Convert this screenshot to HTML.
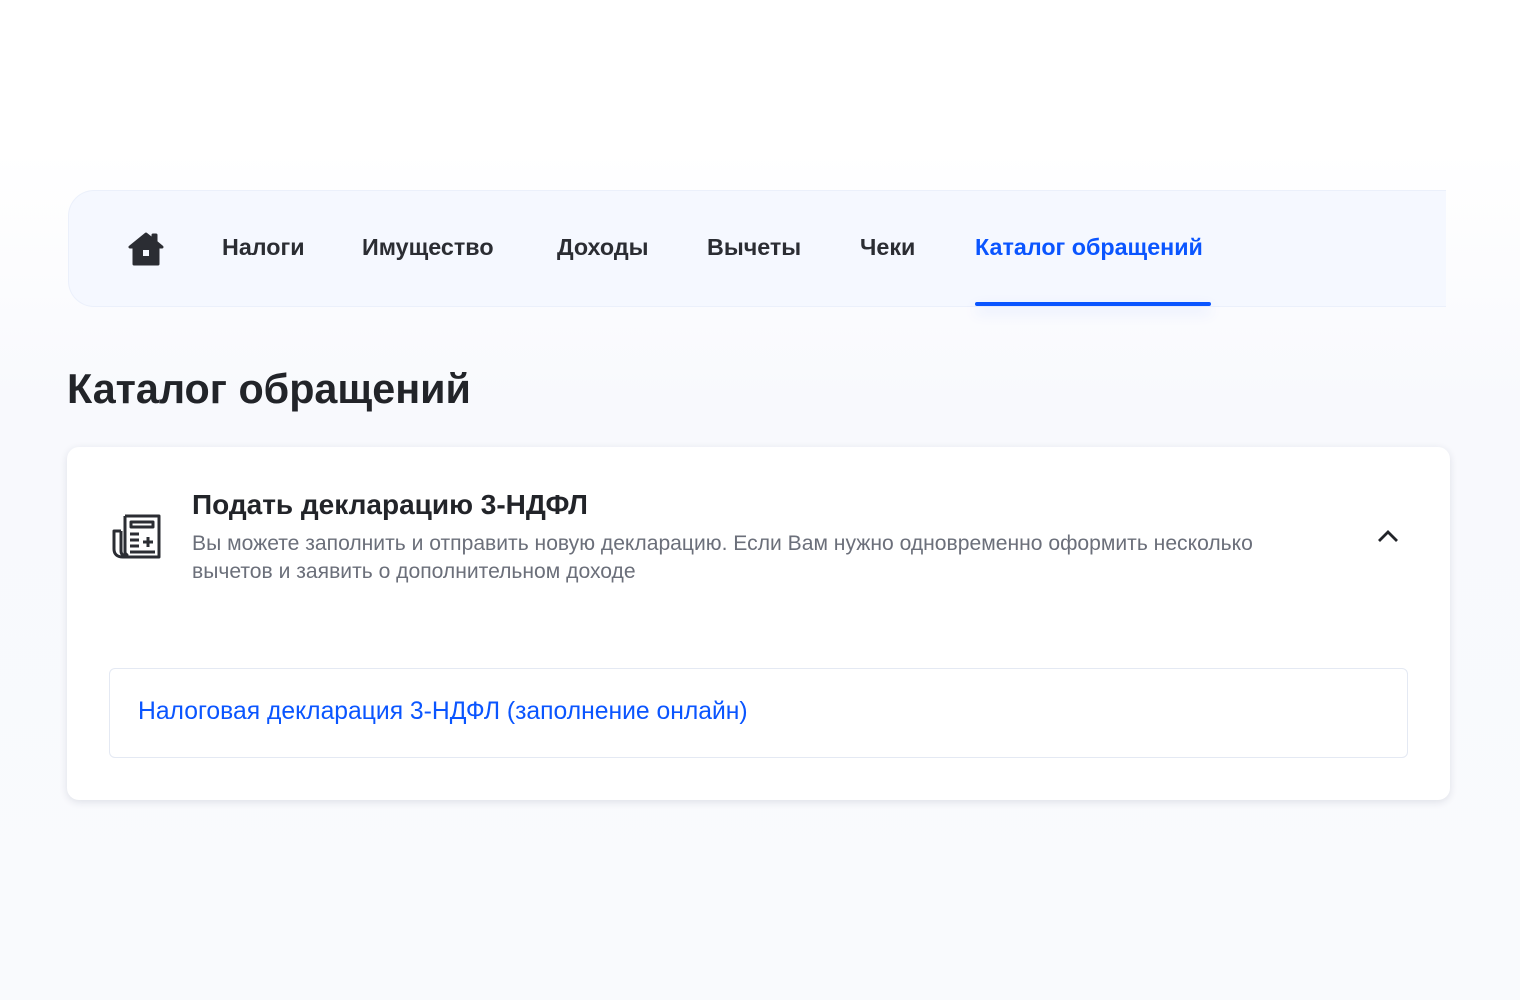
<!DOCTYPE html>
<html><head><meta charset="utf-8"><style>
body{margin:0;width:1520px;height:1000px;background:linear-gradient(#fff 0,#fff 150px,#f8f9fd 400px,#f9fafd 1000px);font-family:"Liberation Sans",sans-serif;position:relative;overflow:hidden}
.nav{position:absolute;left:68px;top:190px;width:1377px;height:115px;background:#f5f8ff;border:1px solid #ebf0fb;border-right:none;border-radius:26px 0 0 26px}
.nav span{position:absolute;top:43px;font-size:23.3px;font-weight:bold;color:#2b2d33}
.act{color:#0a55ff!important}
.ul{position:absolute;left:906px;top:111px;width:236px;height:4px;background:#0a55ff;border-radius:2px;box-shadow:0 6px 14px rgba(10,85,255,.15)}
h1{position:absolute;left:67px;top:366px;margin:0;font-size:41.3px;color:#222429}
.card{position:absolute;left:67px;top:447px;width:1383px;height:353px;background:#fff;border-radius:12px;box-shadow:0 2px 8px rgba(30,40,70,.12)}
.t{position:absolute;left:125px;top:42px;font-size:28px;font-weight:bold;color:#222429}
.d{position:absolute;left:125px;top:83px;width:1110px;font-size:21.1px;line-height:28px;color:#6b6f7a}
.link{position:absolute;left:42px;top:221px;width:1299px;height:90px;border:1px solid #e4e9f3;border-radius:6px;box-sizing:border-box}
.link span{position:absolute;left:28px;top:29px;font-size:24.7px;color:#0a55ff}
</style></head><body>
<div class="nav">
<svg style="position:absolute;left:59px;top:40px" width="36" height="36" viewBox="0 0 36 36"><path d="M18 3 L2 16 L6 16 L6 33 L30 33 L30 16 L34 16 L28 11 L28 4 L25 4 L25 8.5 Z" fill="#2b2d33" stroke="#2b2d33" stroke-width="3" stroke-linejoin="round"/><rect x="15" y="19" width="6" height="6" fill="#f5f8ff"/></svg>
<span style="left:153px">Налоги</span>
<span style="left:293px">Имущество</span>
<span style="left:488px">Доходы</span>
<span style="left:638px">Вычеты</span>
<span style="left:791px">Чеки</span>
<span class="act" style="left:906px">Каталог обращений</span>
<div class="ul"></div>
</div>
<h1>Каталог обращений</h1>
<div class="card">
<svg style="position:absolute;left:44px;top:66px" width="52" height="48" viewBox="0 0 52 48"><g fill="none" stroke="#2b2d33" stroke-width="3" stroke-linejoin="round"><path d="M14 3 H48 V44 H12 C6 44 3 41 3 36 V18 H10"/><path d="M10 18 V38 C10 42 14 44 16 42 L14 40 V3"/><rect x="20" y="9" width="22" height="5"/><path d="M19 21 H28 M19 27 H28 M19 33 H28 M19 39 H44 M32 29 H42 M37 24 V34"/></g></svg>
<div class="t">Подать декларацию 3-НДФЛ</div>
<div class="d">Вы можете заполнить и отправить новую декларацию. Если Вам нужно одновременно оформить несколько вычетов и заявить о дополнительном доходе</div>
<svg style="position:absolute;left:1310px;top:82px" width="22" height="14" viewBox="0 0 22 14"><path d="M2 12 L11 3 L20 12" fill="none" stroke="#222429" stroke-width="2.8"/></svg>
<div class="link"><span>Налоговая декларация 3-НДФЛ (заполнение онлайн)</span></div>
</div>
</body></html>
